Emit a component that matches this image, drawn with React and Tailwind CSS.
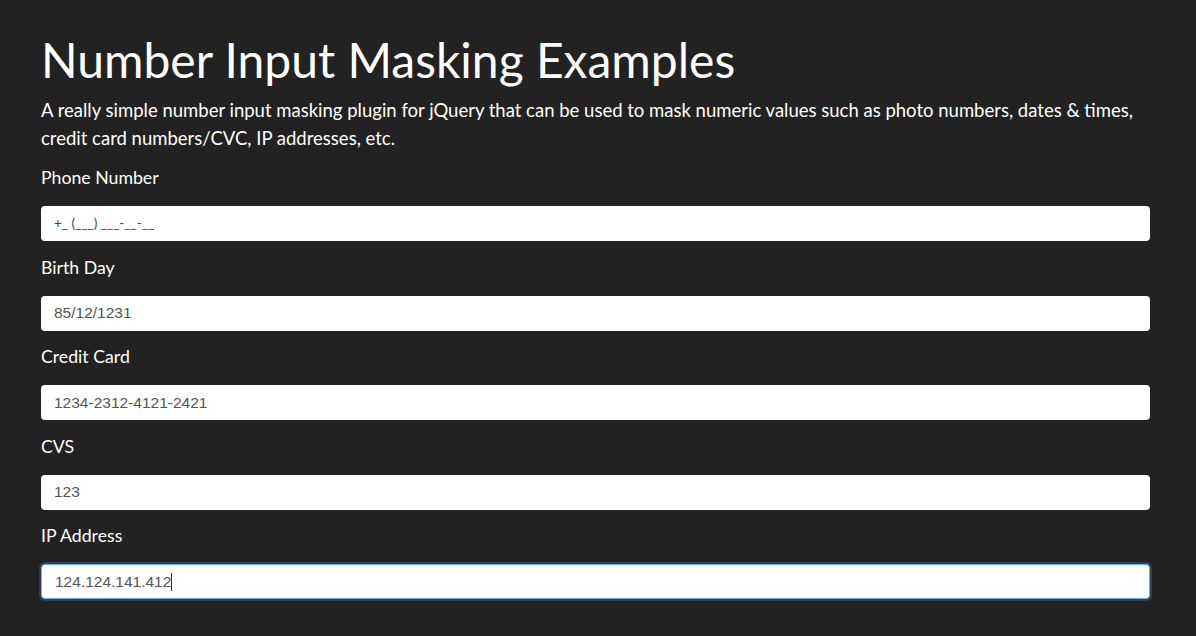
import React from 'react'

const fields = [
  { label: 'Phone Number', value: '+_ (___) ___-__-__', lato: true },
  { label: 'Birth Day', value: '85/12/1231' },
  { label: 'Credit Card', value: '1234-2312-4121-2421' },
  { label: 'CVS', value: '123' },
  { label: 'IP Address', value: '124.124.141.412', focus: true },
]

export default function App() {
  return (
    <div className="min-h-screen bg-[#222222] text-white font-['Lato',sans-serif]">
      <div className="ml-[41px] w-[1109px] pt-[28px]">
        <h1 className="text-[48px] leading-[64px] font-normal">
          Number Input Masking Examples
        </h1>
        <p className="text-[18.5px] leading-[28px] mt-[4px]">
          A really simple number input masking plugin for jQuery that can be used to mask numeric values such as photo numbers, dates &amp; times, credit card numbers/CVC, IP addresses, etc.
        </p>
        <div className="mt-[14px]">
          {fields.map((f) => (
            <div key={f.label} className="mb-[14.5px]">
              <label className="block text-[17.7px] leading-[24px] mb-[16px]">{f.label}</label>
              <div
                className={
                  'h-[35px] rounded-[4px] bg-white flex items-center px-[13px] text-[#555] ' +
                  (f.focus ? 'border border-[#66afe9] shadow-[0_0_0_2px_rgba(66,100,140,0.45)]' : '')
                }
              >
                <span
                  className={
                    f.lato
                      ? "font-['Lato',sans-serif] text-[13.5px] text-[#444]"
                      : "font-['Liberation_Sans',Arial,sans-serif] text-[15.5px]"
                  }
                >
                  {f.value}
                </span>
                {f.focus && <span className="inline-block w-px h-[18px] bg-[#333]" />}
              </div>
            </div>
          ))}
        </div>
      </div>
    </div>
  )
}
